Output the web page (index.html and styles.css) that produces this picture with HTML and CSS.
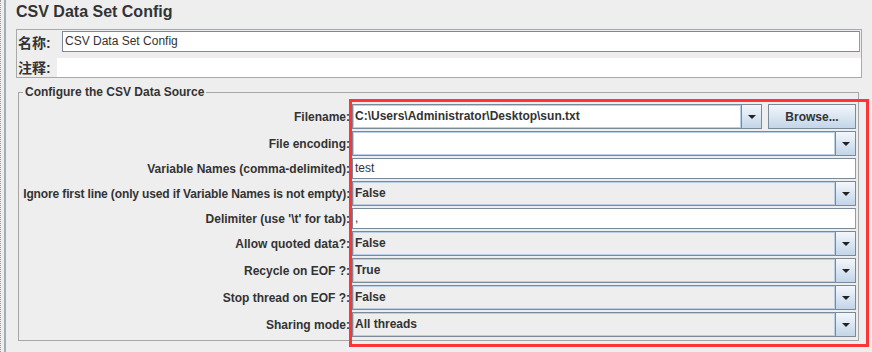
FILE: index.html
```html
<!DOCTYPE html>
<html lang="zh">

<head>
  <meta charset="UTF-8">
  <meta name="viewport" content="width=device-width, initial-scale=1.0">
  <title>CSV Data Set Config</title>
  <link rel="stylesheet" href="styles.css">
</head>

<body>
  <div class="frame">
    <div class="divider"></div>
    <div class="content">
      <h1 class="title">CSV Data Set Config</h1>

      <div class="name-panel">
        <div class="name-row">
          <span class="cn-label name-label">名称:</span>
          <div class="text-field name-field">CSV Data Set Config</div>
        </div>
        <div class="comment-row">
          <span class="cn-label comment-label">注释:</span>
          <div class="comment-box"></div>
        </div>
      </div>

      <fieldset class="source">
        <legend>Configure the CSV Data Source</legend>
        <div class="form-grid">
          <label>Filename:</label>
          <div class="file-row">
            <div class="combo editable">
              <span class="combo-value">C:\Users\Administrator\Desktop\sun.txt</span>
              <span class="combo-arrow"></span>
            </div>
            <button class="browse-btn">Browse...</button>
          </div>

          <label>File encoding:</label>
          <div class="combo editable">
            <span class="combo-value"></span>
            <span class="combo-arrow"></span>
          </div>

          <label>Variable Names (comma-delimited):</label>
          <div class="text-field">test</div>

          <label class="long-label">Ignore first line (only used if Variable Names is not empty):</label>
          <div class="combo">
            <span class="combo-value">False</span>
            <span class="combo-arrow"></span>
          </div>

          <label>Delimiter (use '\t' for tab):</label>
          <div class="text-field">,</div>

          <label>Allow quoted data?:</label>
          <div class="combo">
            <span class="combo-value">False</span>
            <span class="combo-arrow"></span>
          </div>

          <label>Recycle on EOF ?:</label>
          <div class="combo">
            <span class="combo-value">True</span>
            <span class="combo-arrow"></span>
          </div>

          <label>Stop thread on EOF ?:</label>
          <div class="combo">
            <span class="combo-value">False</span>
            <span class="combo-arrow"></span>
          </div>

          <label>Sharing mode:</label>
          <div class="combo">
            <span class="combo-value">All threads</span>
            <span class="combo-arrow"></span>
          </div>
        </div>
      </fieldset>
    </div>
  </div>

  <!-- red annotation box drawn over the fields -->
  <div class="highlight"></div>
</body>
</html>
```

FILE: styles.css
```css
html,
body {
  margin: 0;
  background-color: #eeeeee;
  color: #333333;
  font-family: "Liberation Sans", Arial, "Noto Sans CJK SC", sans-serif;
  font-size: 12px;
}

.frame {
  display: flex;
  min-height: 352px;
}

.divider {
  width: 6px;
  flex-shrink: 0;
  box-sizing: border-box;
  border-left: 1px dotted #9c9c9c;
  border-right: 2px solid #a4acb8;
}

.content {
  flex: 1;
  padding: 0 10px 0 10px;
}

.title {
  margin: 0;
  padding-top: 2px;
  font-size: 16px;
  line-height: 20px;
  font-weight: bold;
}

/* name / comment block */
.name-panel {
  margin-top: 7px;
  border: 1px solid #a9a9a9;
  padding: 1px 1px 0 1px;
}

.name-row,
.comment-row {
  display: flex;
  align-items: center;
}

.comment-row {
  margin-top: 5px;
  margin-right: -1px;
}

.cn-label {
  font-family: "Liberation Sans", "Noto Sans CJK SC", sans-serif;
  font-size: 14px;
  font-weight: bold;
  white-space: nowrap;
}

.name-label {
  width: 44px;
}

.comment-label {
  width: 39px;
}

.comment-box {
  flex: 1;
  height: 19px;
  background: #ffffff;
}

.name-field {
  flex: 1;
}

/* csv source group */
.source {
  margin: 7px 3px 0 2px;
  padding: 5px 2px 3px 1px;
  border: 1px solid #a6a6a6;
  min-width: 0;
}

.source legend {
  margin-left: 3px;
  padding: 0 2px;
  font-size: 12px;
  line-height: 14px;
  font-weight: bold;
}

.form-grid {
  display: grid;
  grid-template-columns: 330px 1fr;
  column-gap: 2px;
  row-gap: 2px;
}

/* flex-end so a long label spills to the left, not under the field */
.form-grid label {
  display: flex;
  justify-content: flex-end;
  align-self: center;
  white-space: nowrap;
  font-weight: bold;
  padding-top: 1px;
}

.form-grid .long-label {
  letter-spacing: -0.13px;
}

.file-row {
  display: flex;
  gap: 6px;
}

.file-row .combo {
  flex: 1;
}

.text-field {
  box-sizing: border-box;
  height: 21px;
  line-height: 19px;
  padding-left: 2px;
  background: #ffffff;
  border: 1px solid #7a8a99;
  border-right-color: #8f9cab;
  white-space: nowrap;
}

.combo {
  display: flex;
  box-sizing: border-box;
  height: 25px;
  border: 1px solid #7a8a99;
  background: #eeeeee;
}

.combo-value {
  flex: 1;
  padding-left: 2px;
  line-height: 23px;
  font-weight: bold;
  white-space: nowrap;
  overflow: hidden;
  box-shadow: inset 0 0 0 1px #b8cfe5;
}

.combo.editable .combo-value {
  background: #ffffff;
  border-right: 1px solid #7a8a99;
}

.combo-arrow {
  width: 19px;
  display: flex;
  align-items: center;
  justify-content: center;
  background: linear-gradient(#f3f7fb, #dde8f3 45%, #c3d5e8);
  border-left: 1px solid #7a8a99;
}

.combo.editable .combo-arrow {
  border-left: none;
}

.combo-arrow::after {
  content: "";
  border-left: 4px solid transparent;
  border-right: 4px solid transparent;
  border-top: 4px solid #222222;
}

.browse-btn {
  width: 88px;
  height: 25px;
  padding: 0;
  box-sizing: border-box;
  border: 1px solid #7a8a99;
  background: linear-gradient(#f3f7fb, #dde8f3 45%, #c3d5e8);
  color: #333333;
  font-family: inherit;
  font-size: 12px;
  font-weight: bold;
}

.highlight {
  position: absolute;
  left: 349px;
  top: 99px;
  width: 520px;
  height: 248px;
  box-sizing: border-box;
  border: 3px solid #ff3535;
  pointer-events: none;
}
```
